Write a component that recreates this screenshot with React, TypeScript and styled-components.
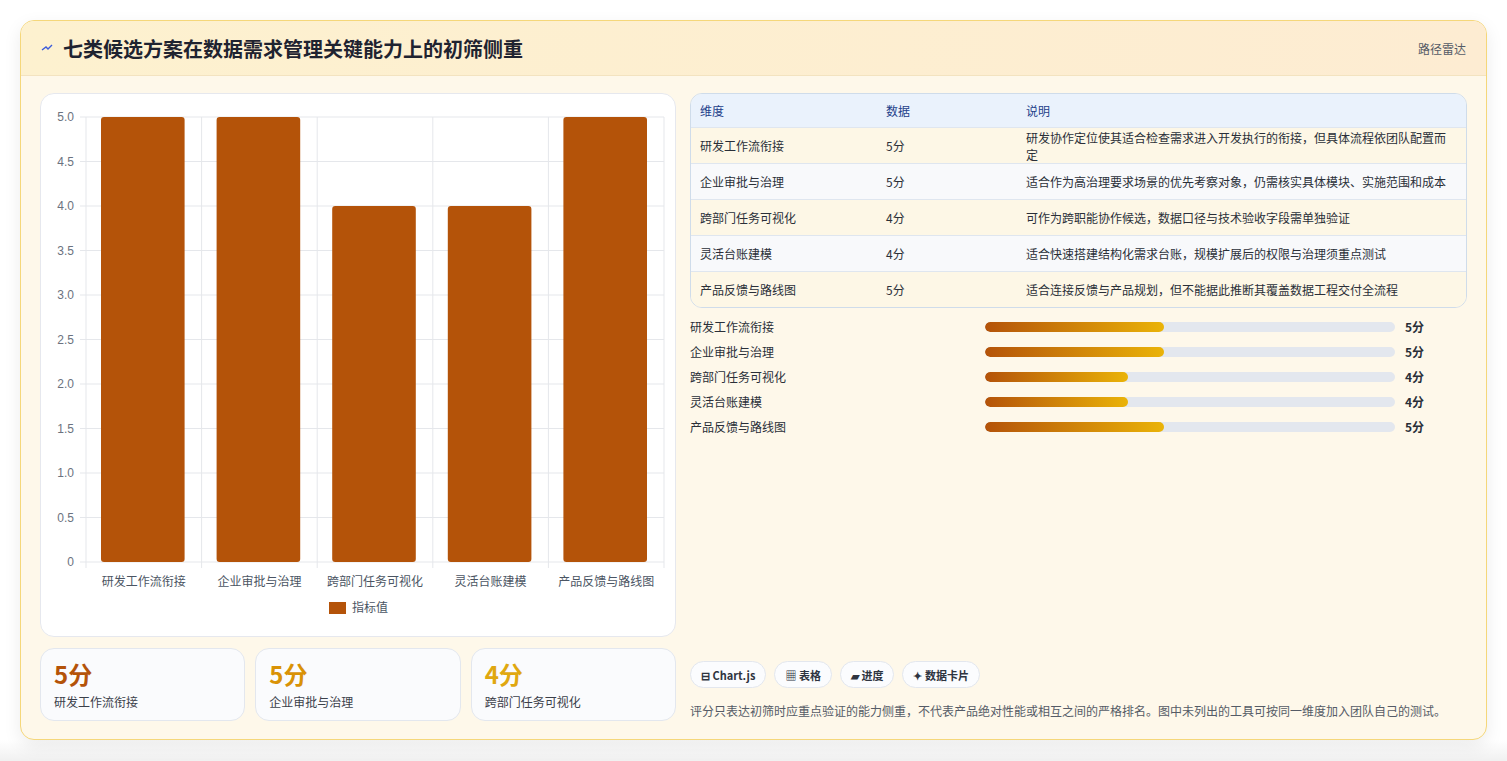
import styled, { createGlobalStyle } from "styled-components"

const Global = createGlobalStyle`
  body { margin: 0; background: #f3f3f3; font-family: "Noto Sans CJK SC", "Noto Sans", sans-serif; }
`

const Page = styled.div`
  padding: 20px 20px 20px 20px;
  height: 761px;
  box-sizing: border-box;
  background: linear-gradient(#ffffff 0, #ffffff 740px, #f1f1f1 760px);
`
const Card = styled.div`
  border: 1px solid #f5d77a;
  border-radius: 14px;
  background: #fef8ea;
  overflow: hidden;
  box-shadow: 0 6px 18px rgba(0,0,0,0.08);
`
const Header = styled.div`
  height: 54px;
  display: flex;
  align-items: center;
  justify-content: space-between;
  padding: 0 20px;
  background: linear-gradient(90deg, #fdf1cf, #fdecd2);
  border-bottom: 1px solid #f3e3c0;
`
const Title = styled.h1`
  margin: 0;
  font-size: 20px;
  font-weight: 700;
  color: #1f2330;
  display: flex;
  align-items: center;
  gap: 10px;
`
const Route = styled.span`
  font-size: 12px;
  color: #555b66;
`
const Body = styled.div`
  display: grid;
  grid-template-columns: 636px 1fr;
  gap: 14px;
  padding: 17px 19px 18px 19px;
`
const Col = styled.div`
  display: flex;
  flex-direction: column;
`
const ChartBox = styled.div`
  height: 544px;
  background: #fff;
  border: 1px solid #e6e8ee;
  border-radius: 14px;
  box-sizing: border-box;
`
const Stats = styled.div`
  margin-top: 11px;
  display: grid;
  grid-template-columns: repeat(3, 1fr);
  gap: 10px;
`
const Stat = styled.div`
  height: 73px;
  box-sizing: border-box;
  background: #fafbfd;
  border: 1px solid #e3e7ee;
  border-radius: 14px;
  padding: 10px 13px;
`
const StatNum = styled.div<{ $c: string }>`
  font-size: 24px;
  font-weight: 700;
  color: ${p => p.$c};
  line-height: 30px;
`
const StatLabel = styled.div`
  font-size: 12px;
  color: #3b404a;
  margin-top: 4px;
`
const Table = styled.div`
  border: 1px solid #cfdcea;
  border-radius: 12px;
  overflow: hidden;
  font-size: 12px;
  color: #2a2f38;
`
const Row = styled.div<{ $bg: string }>`
  display: grid;
  grid-template-columns: 186px 140px 1fr;
  height: 35px;
  align-items: center;
  padding: 0 9px;
  background: ${p => p.$bg};
  border-top: 1px solid #dfe6ef;
  &:first-child { border-top: none; height: 33px; color: #23408a; }
`
const Bars = styled.div`
  margin-top: 10px;
  display: flex;
  flex-direction: column;
  gap: 8px;
`
const BarRow = styled.div`
  display: grid;
  grid-template-columns: 295px 410px 1fr;
  align-items: center;
  height: 17px;
  font-size: 12px;
  color: #2a2f38;
`
const Track = styled.div`
  height: 10px;
  border-radius: 5px;
  background: #e3e7ee;
  overflow: hidden;
`
const Fill = styled.div`
  height: 100%;
  border-radius: 5px;
  background: linear-gradient(90deg, #b45309, #eab308);
`
const Val = styled.span`
  padding-left: 10px;
  font-weight: 700;
`
const Chips = styled.div`
  margin-top: auto;
  display: flex;
  gap: 8px;
`
const Chip = styled.span`
  height: 27px;
  box-sizing: border-box;
  padding: 0 10px;
  display: flex;
  align-items: center;
  gap: 4px;
  font-size: 11px;
  font-weight: 700;
  color: #2e3440;
  background: #fbfcfe;
  border: 1px solid #e3e7ee;
  border-radius: 14px;
`
const Note = styled.p`
  margin: 12px 0 0;
  font-size: 12px;
  line-height: 21px;
  color: #555b66;
`

const items = [
  { n: "研发工作流衔接", v: 5, d: "研发协作定位使其适合检查需求进入开发执行的衔接，但具体流程依团队配置而定" },
  { n: "企业审批与治理", v: 5, d: "适合作为高治理要求场景的优先考察对象，仍需核实具体模块、实施范围和成本" },
  { n: "跨部门任务可视化", v: 4, d: "可作为跨职能协作候选，数据口径与技术验收字段需单独验证" },
  { n: "灵活台账建模", v: 4, d: "适合快速搭建结构化需求台账，规模扩展后的权限与治理须重点测试" },
  { n: "产品反馈与路线图", v: 5, d: "适合连接反馈与产品规划，但不能据此推断其覆盖数据工程交付全流程" },
]

const Chart = () => {
  const top = 23, bottom = 468, left = 45, right = 623
  const ticks = [0, 0.5, 1, 1.5, 2, 2.5, 3, 3.5, 4, 4.5, 5]
  const y = (v: number) => bottom - (v / 5) * (bottom - top)
  const cw = (right - left) / 5
  return (
    <svg width="634" height="542" fontFamily="'Noto Sans CJK SC', sans-serif">
      {ticks.map(t => (
        <g key={t}>
          <line x1={left - 6} x2={right} y1={y(t)} y2={y(t)} stroke="#e5e7eb" />
          <text x={left - 12} y={y(t) + 4} textAnchor="end" fontSize="12" fill="#6b7280" fontFamily="'Liberation Sans', sans-serif">{t === 0 ? "0" : t.toFixed(1)}</text>
        </g>
      ))}
      {[0, 1, 2, 3, 4, 5].map(i => (
        <line key={i} x1={left + i * cw} x2={left + i * cw} y1={top} y2={bottom + 6} stroke="#e5e7eb" />
      ))}
      {items.map((it, i) => (
        <g key={it.n}>
          <rect x={left + i * cw + 15} y={y(it.v)} width={cw - 32} height={bottom - y(it.v)} rx="3" fill="#b45309" />
          <text x={left + i * cw + cw / 2} y={492} textAnchor="middle" fontSize="12" fill="#4b5563">{it.n}</text>
        </g>
      ))}
      <rect x="288" y="508" width="17" height="12" fill="#b45309" />
      <text x="311" y="518" fontSize="12" fill="#4b5563">指标值</text>
    </svg>
  )
}

export default function App() {
  return (
    <Page>
      <Global />
      <Card>
        <Header>
          <Title>
            <svg width="12" height="12" viewBox="0 0 12 12"><path d="M1 8 L5 5 L7 7 L11 3" stroke="#3b5bdb" strokeWidth="1.4" fill="none" /></svg>
            七类候选方案在数据需求管理关键能力上的初筛侧重
          </Title>
          <Route>路径雷达</Route>
        </Header>
        <Body>
          <Col>
            <ChartBox><Chart /></ChartBox>
            <Stats>
              <Stat><StatNum $c="#b45309">5分</StatNum><StatLabel>研发工作流衔接</StatLabel></Stat>
              <Stat><StatNum $c="#d99206">5分</StatNum><StatLabel>企业审批与治理</StatLabel></Stat>
              <Stat><StatNum $c="#e0a810">4分</StatNum><StatLabel>跨部门任务可视化</StatLabel></Stat>
            </Stats>
          </Col>
          <Col>
            <Table>
              <Row $bg="#eaf2fc"><span>维度</span><span>数据</span><span>说明</span></Row>
              {items.map((it, i) => (
                <Row key={it.n} $bg={i % 2 ? "#f8f9fb" : "#fdf7e6"}>
                  <span>{it.n}</span><span>{it.v}分</span><span>{it.d}</span>
                </Row>
              ))}
            </Table>
            <Bars>
              {items.map(it => (
                <BarRow key={it.n}>
                  <span>{it.n}</span>
                  <Track><Fill style={{ width: `${(it.v / 11.45) * 100}%` }} /></Track>
                  <Val>{it.v}分</Val>
                </BarRow>
              ))}
            </Bars>
            <Chips>
              <Chip>⊟ Chart.js</Chip>
              <Chip>▦ 表格</Chip>
              <Chip>▰ 进度</Chip>
              <Chip>✦ 数据卡片</Chip>
            </Chips>
            <Note>评分只表达初筛时应重点验证的能力侧重，不代表产品绝对性能或相互之间的严格排名。图中未列出的工具可按同一维度加入团队自己的测试。</Note>
          </Col>
        </Body>
      </Card>
    </Page>
  )
}
